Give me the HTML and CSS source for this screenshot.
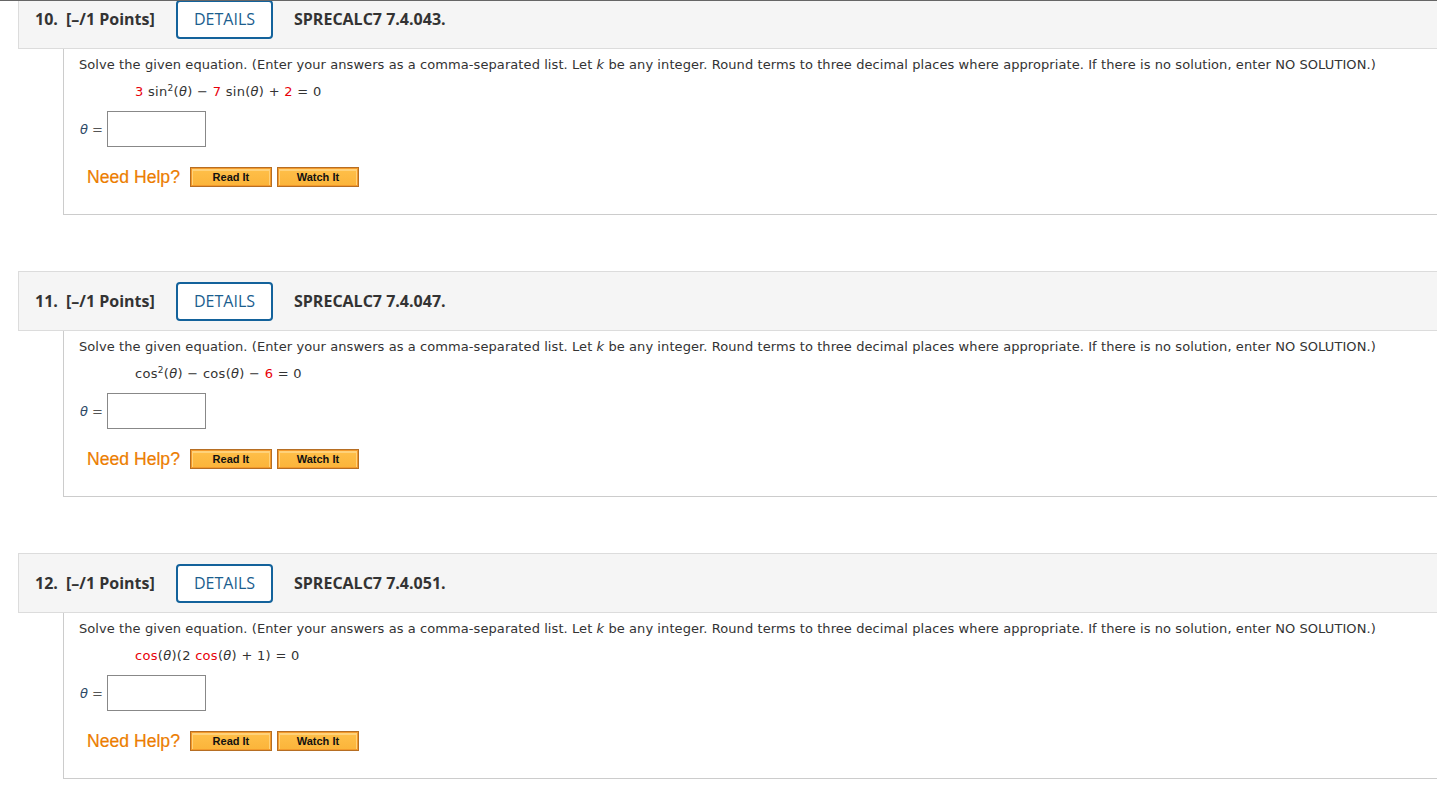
FILE: index.html
```html
<!DOCTYPE html>
<html>
<head>
<meta charset="utf-8">
<link rel="stylesheet" href="styles.css">
</head>
<body>
<div class="topline"></div>
<div class="page">
  <section class="q first">
    <div class="qhead">
      <span class="qnum">10.</span>
      <span class="pts">[–/1 Points]</span>
      <span class="details">DETAILS</span>
      <span class="code">SPRECALC7 7.4.043.</span>
    </div>
    <div class="qbody">
      <p class="prompt">Solve the given equation. (Enter your answers as a comma-separated list. Let <i>k</i> be any integer. Round terms to three decimal places where appropriate. If there is no solution, enter NO SOLUTION.)</p>
      <p class="eq"><span class="r">3</span> sin<sup>2</sup>(<i>θ</i>) − <span class="r">7</span> sin(<i>θ</i>) + <span class="r">2</span> = 0</p>
      <div class="ans"><span class="lbl"><i>θ</i> =</span><span class="box"></span></div>
      <div class="help"><span class="need">Need Help?</span><span class="btn">Read It</span><span class="btn">Watch It</span></div>
    </div>
  </section>
  <section class="q">
    <div class="qhead">
      <span class="qnum">11.</span>
      <span class="pts">[–/1 Points]</span>
      <span class="details">DETAILS</span>
      <span class="code">SPRECALC7 7.4.047.</span>
    </div>
    <div class="qbody">
      <p class="prompt">Solve the given equation. (Enter your answers as a comma-separated list. Let <i>k</i> be any integer. Round terms to three decimal places where appropriate. If there is no solution, enter NO SOLUTION.)</p>
      <p class="eq">cos<sup>2</sup>(<i>θ</i>) − cos(<i>θ</i>) − <span class="r">6</span> = 0</p>
      <div class="ans"><span class="lbl"><i>θ</i> =</span><span class="box"></span></div>
      <div class="help"><span class="need">Need Help?</span><span class="btn">Read It</span><span class="btn">Watch It</span></div>
    </div>
  </section>
  <section class="q">
    <div class="qhead">
      <span class="qnum">12.</span>
      <span class="pts">[–/1 Points]</span>
      <span class="details">DETAILS</span>
      <span class="code">SPRECALC7 7.4.051.</span>
    </div>
    <div class="qbody">
      <p class="prompt">Solve the given equation. (Enter your answers as a comma-separated list. Let <i>k</i> be any integer. Round terms to three decimal places where appropriate. If there is no solution, enter NO SOLUTION.)</p>
      <p class="eq"><span class="r">cos</span>(<i>θ</i>)(2 <span class="r">cos</span>(<i>θ</i>) + 1) = 0</p>
      <div class="ans"><span class="lbl"><i>θ</i> =</span><span class="box"></span></div>
      <div class="help"><span class="need">Need Help?</span><span class="btn">Read It</span><span class="btn">Watch It</span></div>
    </div>
  </section>
</div>
</body>
</html>
```
FILE: styles.css
```css
html, body {
  margin: 0;
  padding: 0;
  background: #fff;
}
body {
  font-family: "DejaVu Sans", Verdana, sans-serif;
  color: #333;
  overflow: hidden;
}
.topline {
  height: 1px;
  background: #666;
}
.page {
  padding-left: 18px;
  height: 807px;
  overflow: hidden;
}
.q {
  margin-bottom: 56px;
}
.q.first {
  margin-top: -12px;
}
.qhead {
  display: flex;
  align-items: center;
  height: 58px;
  border: 1px solid #dcdcdc;
  border-right: none;
  background: #f5f5f5;
  padding-left: 16px;
  font-family: "Open Sans", sans-serif;
  font-size: 16px;
  font-weight: 700;
  color: #333;
}
.qnum {
  width: 31px;
}
.pts {
  width: 110px;
}
.details {
  box-sizing: border-box;
  width: 97px;
  height: 39px;
  border: 2px solid #13629b;
  border-radius: 4px;
  background: #fff;
  color: #1b5e8e;
  font-weight: 500;
  display: flex;
  align-items: center;
  justify-content: center;
  margin-right: 21px;
}
.qbody {
  margin-left: 45px;
  border-left: 1px solid #ccc;
  border-bottom: 1px solid #ccc;
  padding: 7px 0 26px 15px;
  font-size: 13px;
}
.prompt {
  margin: 0;
  line-height: 18px;
  letter-spacing: 0.08px;
}
.eq {
  margin: 9px 0 0 56px;
  line-height: 18px;
  letter-spacing: 0.3px;
}
.eq sup {
  font-size: 9px;
  line-height: 0;
  vertical-align: 5px;
}
.r {
  color: #e8000a;
}
.ans {
  display: flex;
  align-items: center;
  margin-top: 10px;
  height: 36px;
}
.lbl {
  width: 27px;
  padding-left: 1px;
  color: #555;
}
.lbl i {
  color: #2e4a66;
}
.box {
  box-sizing: border-box;
  width: 99px;
  height: 36px;
  border: 1px solid #888;
  background: #fff;
}
.help {
  display: flex;
  align-items: center;
  margin-top: 19px;
  padding-left: 8px;
  height: 22px;
}
.need {
  font-family: "Liberation Sans", Arial, sans-serif;
  font-size: 17.6px;
  color: #ec7d00;
  margin-right: 10px;
  -webkit-text-stroke: 0.2px #ec7d00;
}
.btn {
  box-sizing: border-box;
  width: 82px;
  height: 20px;
  margin-right: 5px;
  border: 1px solid #b66e23;
  box-shadow: inset 0 0 0 1px #f39a2c, inset 0 1px 0 2px #ffd27a;
  background: linear-gradient(#ffc04a, #fbb43a);
  font-family: "Liberation Sans", Arial, sans-serif;
  font-weight: 700;
  font-size: 11px;
  color: #111;
  display: flex;
  align-items: center;
  justify-content: center;
}
```
